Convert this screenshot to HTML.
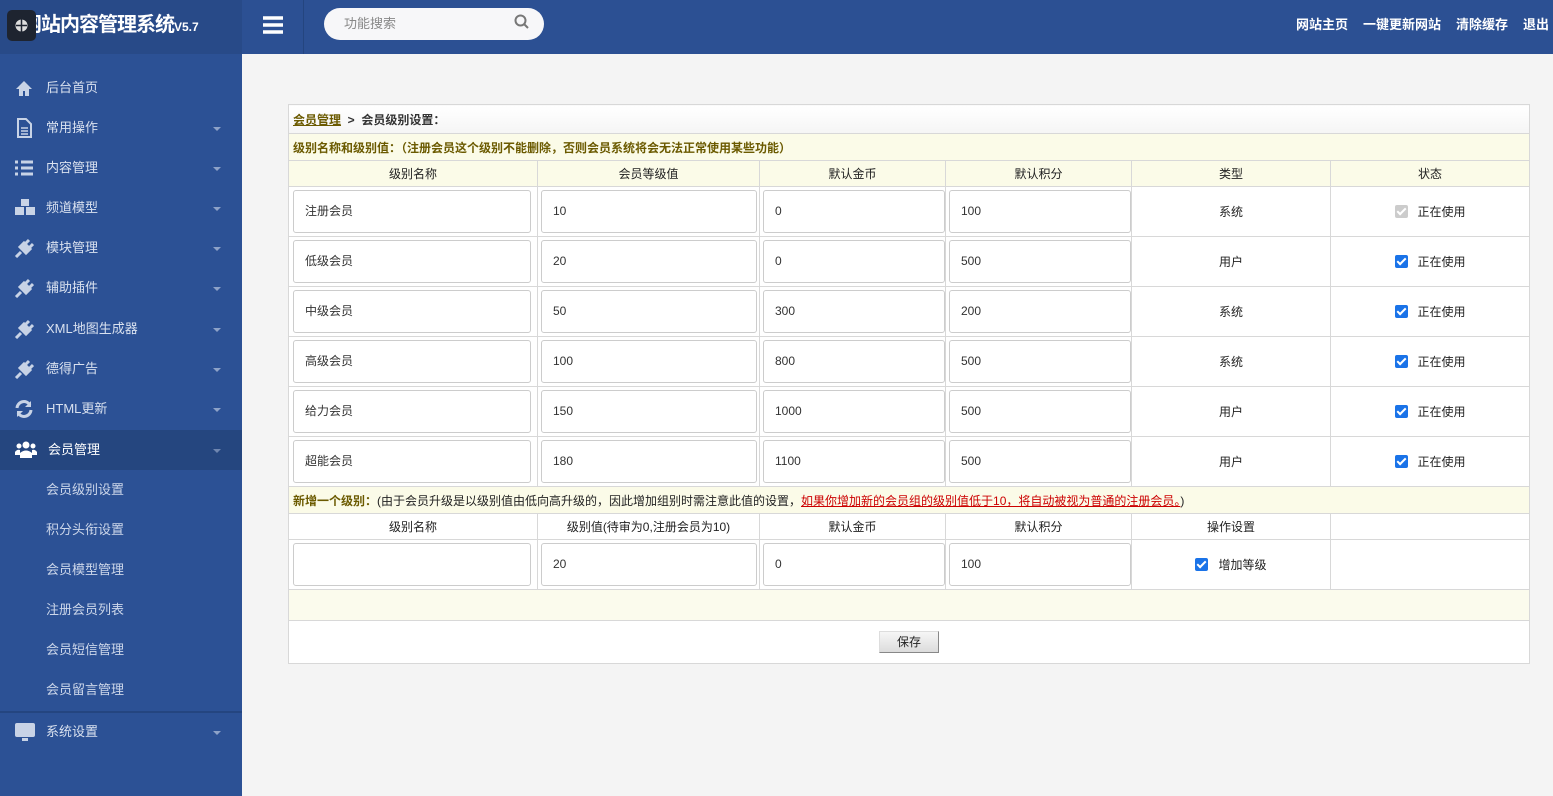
<!DOCTYPE html>
<html><head><meta charset="utf-8"><style>
*{box-sizing:border-box;margin:0;padding:0}
body{width:1553px;height:796px;overflow:hidden;background:#f4f4f4;font-family:"Liberation Sans","Noto Sans CJK SC",sans-serif;font-size:13px;color:#333;position:relative}
#top{position:absolute;left:0;top:0;width:1553px;height:54px;background:#2c5093}
#logo{position:absolute;left:0;top:0;width:242px;height:54px;background:#284a88;color:#fff;font-weight:bold;font-size:20px;line-height:50px;padding-left:22px;letter-spacing:-1px}
#logo small{font-size:12px;letter-spacing:0}
#lg{position:absolute;left:7px;top:10px;width:29px;height:31px;background:#1e2430;border-radius:5px}
#burger{position:absolute;left:242px;top:0;width:62px;height:54px;border-right:1px solid #24457f}
#search{position:absolute;left:324px;top:8px;width:220px;height:32px;background:#f7f7f9;border-radius:16px;color:#888;font-size:13px;line-height:32px;padding-left:20px}
#nav{position:absolute;right:4px;top:0;line-height:50px;color:#fff;font-weight:bold;font-size:13px}
#nav span{margin-left:15px}
#side{position:absolute;left:0;top:54px;width:242px;height:742px;background:#2c5195}
.mi{position:absolute;left:0;width:242px;height:40px;line-height:40px;color:#d9e1ef;font-size:13px;padding-left:46px}
.mi svg{position:absolute;left:14px;top:10px}
.mi .ar{position:absolute;left:213px;top:19px;border-left:4px solid transparent;border-right:4px solid transparent;border-top:4px solid #8da2c8}
.sub{position:absolute;left:46px;color:#cdd7ea;font-size:13px;line-height:20px}
table{position:absolute;left:288px;top:104px;width:1241px;border-collapse:collapse;background:#fff;table-layout:fixed}
td{border:1px solid #d8d8d8;text-align:center;font-size:12px;color:#222;padding:0}
.hd td{background:#fbfbe8;height:26px}
.note{background:#fbfbe8;text-align:left;padding-left:4px;color:#6b5a00;font-weight:bold;height:27px}
.dr td{height:50px}
.in{display:block;margin:0 auto 0 4px;height:43px;border:1px solid #ccc;border-radius:3px;text-align:left;padding-left:11px;line-height:41px;font-size:12px;color:#333;background:#fff}
.cb{display:inline-block;width:13px;height:13px;background:#1a73e8;border-radius:2px;vertical-align:-2px;margin-right:10px;position:relative}
.cb:after{content:"";position:absolute;left:4px;top:1px;width:3px;height:7px;border:solid #fff;border-width:0 2px 2px 0;transform:rotate(45deg)}
.cb.g{background:#ccc}
</style></head><body>
<div id="top">
<div id="logo"><div id="lg"><svg width="29" height="31"><circle cx="14.5" cy="15.5" r="6" fill="#ddd"/><path d="M14.5 9v13M9 15.5h11" stroke="#1e2430" stroke-width="1.5"/></svg></div>网站内容管理系统<small>V5.7</small></div>
<div id="burger"><svg width="62" height="54"><path d="M21 18h20M21 25h20M21 32h20" stroke="#fff" stroke-width="3.5"/></svg></div>
<div id="search">功能搜索<svg style="position:absolute;left:190px;top:6px" width="16" height="16"><circle cx="6.5" cy="6.5" r="5" stroke="#777" stroke-width="2" fill="none"/><path d="M10 10l4 4" stroke="#777" stroke-width="2"/></svg></div>
<div id="nav"><span>网站主页</span><span>一键更新网站</span><span>清除缓存</span><span>退出</span></div>
</div>
<div id="side">
<div class="mi" style="top:14px"><svg width="20" height="20"><path d="M2 11L10 3l8 8h-3v7h-4v-5H9v5H5v-7z" fill="#c8d3e6"/></svg>后台首页</div>
<div class="mi" style="top:54px"><svg width="20" height="20"><path d="M4 1h8l5 5v13H4z" fill="none" stroke="#c8d3e6" stroke-width="2"/><path d="M7 10h7M7 13h7M7 16h7" stroke="#c8d3e6" stroke-width="1.5"/></svg>常用操作<i class="ar"></i></div>
<div class="mi" style="top:94px"><svg width="20" height="20"><path d="M1 4h3M7 4h12M1 10h3M7 10h12M1 16h3M7 16h12" stroke="#c8d3e6" stroke-width="3"/></svg>内容管理<i class="ar"></i></div>
<div class="mi" style="top:134px"><svg width="24" height="20"><path d="M7 1h8v7H7zM1 9h9v8H1zM12 9h9v8h-9z" fill="#c8d3e6"/></svg>频道模型<i class="ar"></i></div>
<div class="mi" style="top:174px"><svg width="20" height="20"><path d="M2 19l5-5M6 9l6 6 4-4-6-6zM11 6l4-4M15 10l4-4" stroke="#c8d3e6" stroke-width="3" fill="#c8d3e6"/></svg>模块管理<i class="ar"></i></div>
<div class="mi" style="top:214px"><svg width="20" height="20"><path d="M2 19l5-5M6 9l6 6 4-4-6-6zM11 6l4-4M15 10l4-4" stroke="#c8d3e6" stroke-width="3" fill="#c8d3e6"/></svg>辅助插件<i class="ar"></i></div>
<div class="mi" style="top:255px"><svg width="20" height="20"><path d="M2 19l5-5M6 9l6 6 4-4-6-6zM11 6l4-4M15 10l4-4" stroke="#c8d3e6" stroke-width="3" fill="#c8d3e6"/></svg>XML地图生成器<i class="ar"></i></div>
<div class="mi" style="top:295px"><svg width="20" height="20"><path d="M2 19l5-5M6 9l6 6 4-4-6-6zM11 6l4-4M15 10l4-4" stroke="#c8d3e6" stroke-width="3" fill="#c8d3e6"/></svg>德得广告<i class="ar"></i></div>
<div class="mi" style="top:335px"><svg width="20" height="20"><path d="M3 9a7 7 0 0 1 13-3M17 11a7 7 0 0 1-13 3" stroke="#c8d3e6" stroke-width="3" fill="none"/><path d="M17 2v6h-6zM3 18v-6h6z" fill="#c8d3e6"/></svg>HTML更新<i class="ar"></i></div>
<div class="mi" style="top:376px;background:#25467f;color:#fff;padding-left:48px"><svg width="24" height="20"><circle cx="12" cy="5" r="3.5" fill="#fff"/><circle cx="5" cy="6" r="2.5" fill="#fff"/><circle cx="19" cy="6" r="2.5" fill="#fff"/><path d="M6 18v-5q6-5 12 0v5zM1 15v-3q2-3 5-2v5zM23 15v-3q-2-3-5-2v5z" fill="#fff"/></svg>会员管理<i class="ar" style="border-top-color:#6f86b0"></i></div>
<div class="sub" style="top:426px">会员级别设置</div>
<div class="sub" style="top:466px">积分头衔设置</div>
<div class="sub" style="top:506px">会员模型管理</div>
<div class="sub" style="top:546px">注册会员列表</div>
<div class="sub" style="top:586px">会员短信管理</div>
<div class="sub" style="top:626px">会员留言管理</div>
<div style="position:absolute;top:657px;left:0;width:242px;height:2px;background:#244580"></div>
<div class="mi" style="top:658px"><svg width="24" height="22"><rect x="1" y="1" width="20" height="14" rx="2" fill="#c8d3e6"/><path d="M8 16h6v3H8z" fill="#c8d3e6"/></svg>系统设置<i class="ar"></i></div>
</div>
<table>
<colgroup><col style="width:249px"><col style="width:222px"><col style="width:186px"><col style="width:186px"><col style="width:199px"><col style="width:199px"></colgroup>
<tr><td colspan="6" style="height:29px;text-align:left;padding-left:4px;font-weight:bold;color:#333;background:linear-gradient(#fff,#f5f5f5)"><u style="color:#6b5a00">会员管理</u> &nbsp;&gt;&nbsp; 会员级别设置：</td></tr>
<tr><td colspan="6" class="note">级别名称和级别值：（注册会员这个级别不能删除，否则会员系统将会无法正常使用某些功能）</td></tr>
<tr class="hd"><td>级别名称</td><td>会员等级值</td><td>默认金币</td><td>默认积分</td><td>类型</td><td>状态</td></tr>
<tr class="dr"><td><span class="in" style="width:238px">注册会员</span></td><td><span class="in" style="width:216px;margin-left:3px">10</span></td><td><span class="in" style="width:182px;margin-left:3px">0</span></td><td><span class="in" style="width:182px;margin-left:3px">100</span></td><td>系统</td><td><span class="cb g"></span>正在使用</td></tr>
<tr class="dr"><td><span class="in" style="width:238px">低级会员</span></td><td><span class="in" style="width:216px;margin-left:3px">20</span></td><td><span class="in" style="width:182px;margin-left:3px">0</span></td><td><span class="in" style="width:182px;margin-left:3px">500</span></td><td>用户</td><td><span class="cb"></span>正在使用</td></tr>
<tr class="dr"><td><span class="in" style="width:238px">中级会员</span></td><td><span class="in" style="width:216px;margin-left:3px">50</span></td><td><span class="in" style="width:182px;margin-left:3px">300</span></td><td><span class="in" style="width:182px;margin-left:3px">200</span></td><td>系统</td><td><span class="cb"></span>正在使用</td></tr>
<tr class="dr"><td><span class="in" style="width:238px">高级会员</span></td><td><span class="in" style="width:216px;margin-left:3px">100</span></td><td><span class="in" style="width:182px;margin-left:3px">800</span></td><td><span class="in" style="width:182px;margin-left:3px">500</span></td><td>系统</td><td><span class="cb"></span>正在使用</td></tr>
<tr class="dr"><td><span class="in" style="width:238px">给力会员</span></td><td><span class="in" style="width:216px;margin-left:3px">150</span></td><td><span class="in" style="width:182px;margin-left:3px">1000</span></td><td><span class="in" style="width:182px;margin-left:3px">500</span></td><td>用户</td><td><span class="cb"></span>正在使用</td></tr>
<tr class="dr"><td><span class="in" style="width:238px">超能会员</span></td><td><span class="in" style="width:216px;margin-left:3px">180</span></td><td><span class="in" style="width:182px;margin-left:3px">1100</span></td><td><span class="in" style="width:182px;margin-left:3px">500</span></td><td>用户</td><td><span class="cb"></span>正在使用</td></tr>
<tr><td colspan="6" class="note">新增一个级别：<span style="font-weight:normal;color:#222">(由于会员升级是以级别值由低向高升级的，因此增加组别时需注意此值的设置，<u style="color:#c00">如果你增加新的会员组的级别值低于10，将自动被视为普通的注册会员。</u>)</span></td></tr>
<tr><td style="height:26px">级别名称</td><td>级别值(待审为0,注册会员为10)</td><td>默认金币</td><td>默认积分</td><td>操作设置</td><td></td></tr>
<tr class="dr"><td><span class="in" style="width:238px"></span></td><td><span class="in" style="width:216px;margin-left:3px">20</span></td><td><span class="in" style="width:182px;margin-left:3px">0</span></td><td><span class="in" style="width:182px;margin-left:3px">100</span></td><td><span class="cb"></span>增加等级</td><td></td></tr>
<tr><td colspan="6" style="height:31px;background:#fbfbed"></td></tr>
<tr><td colspan="6" style="height:43px"><span style="display:inline-block;width:60px;height:22px;line-height:20px;border:1px solid #888;border-top-color:#ddd;border-left-color:#ddd;background:linear-gradient(#f6f6f6,#dcdcdc);font-size:12px">保存</span></td></tr>
</table>
</body></html>
